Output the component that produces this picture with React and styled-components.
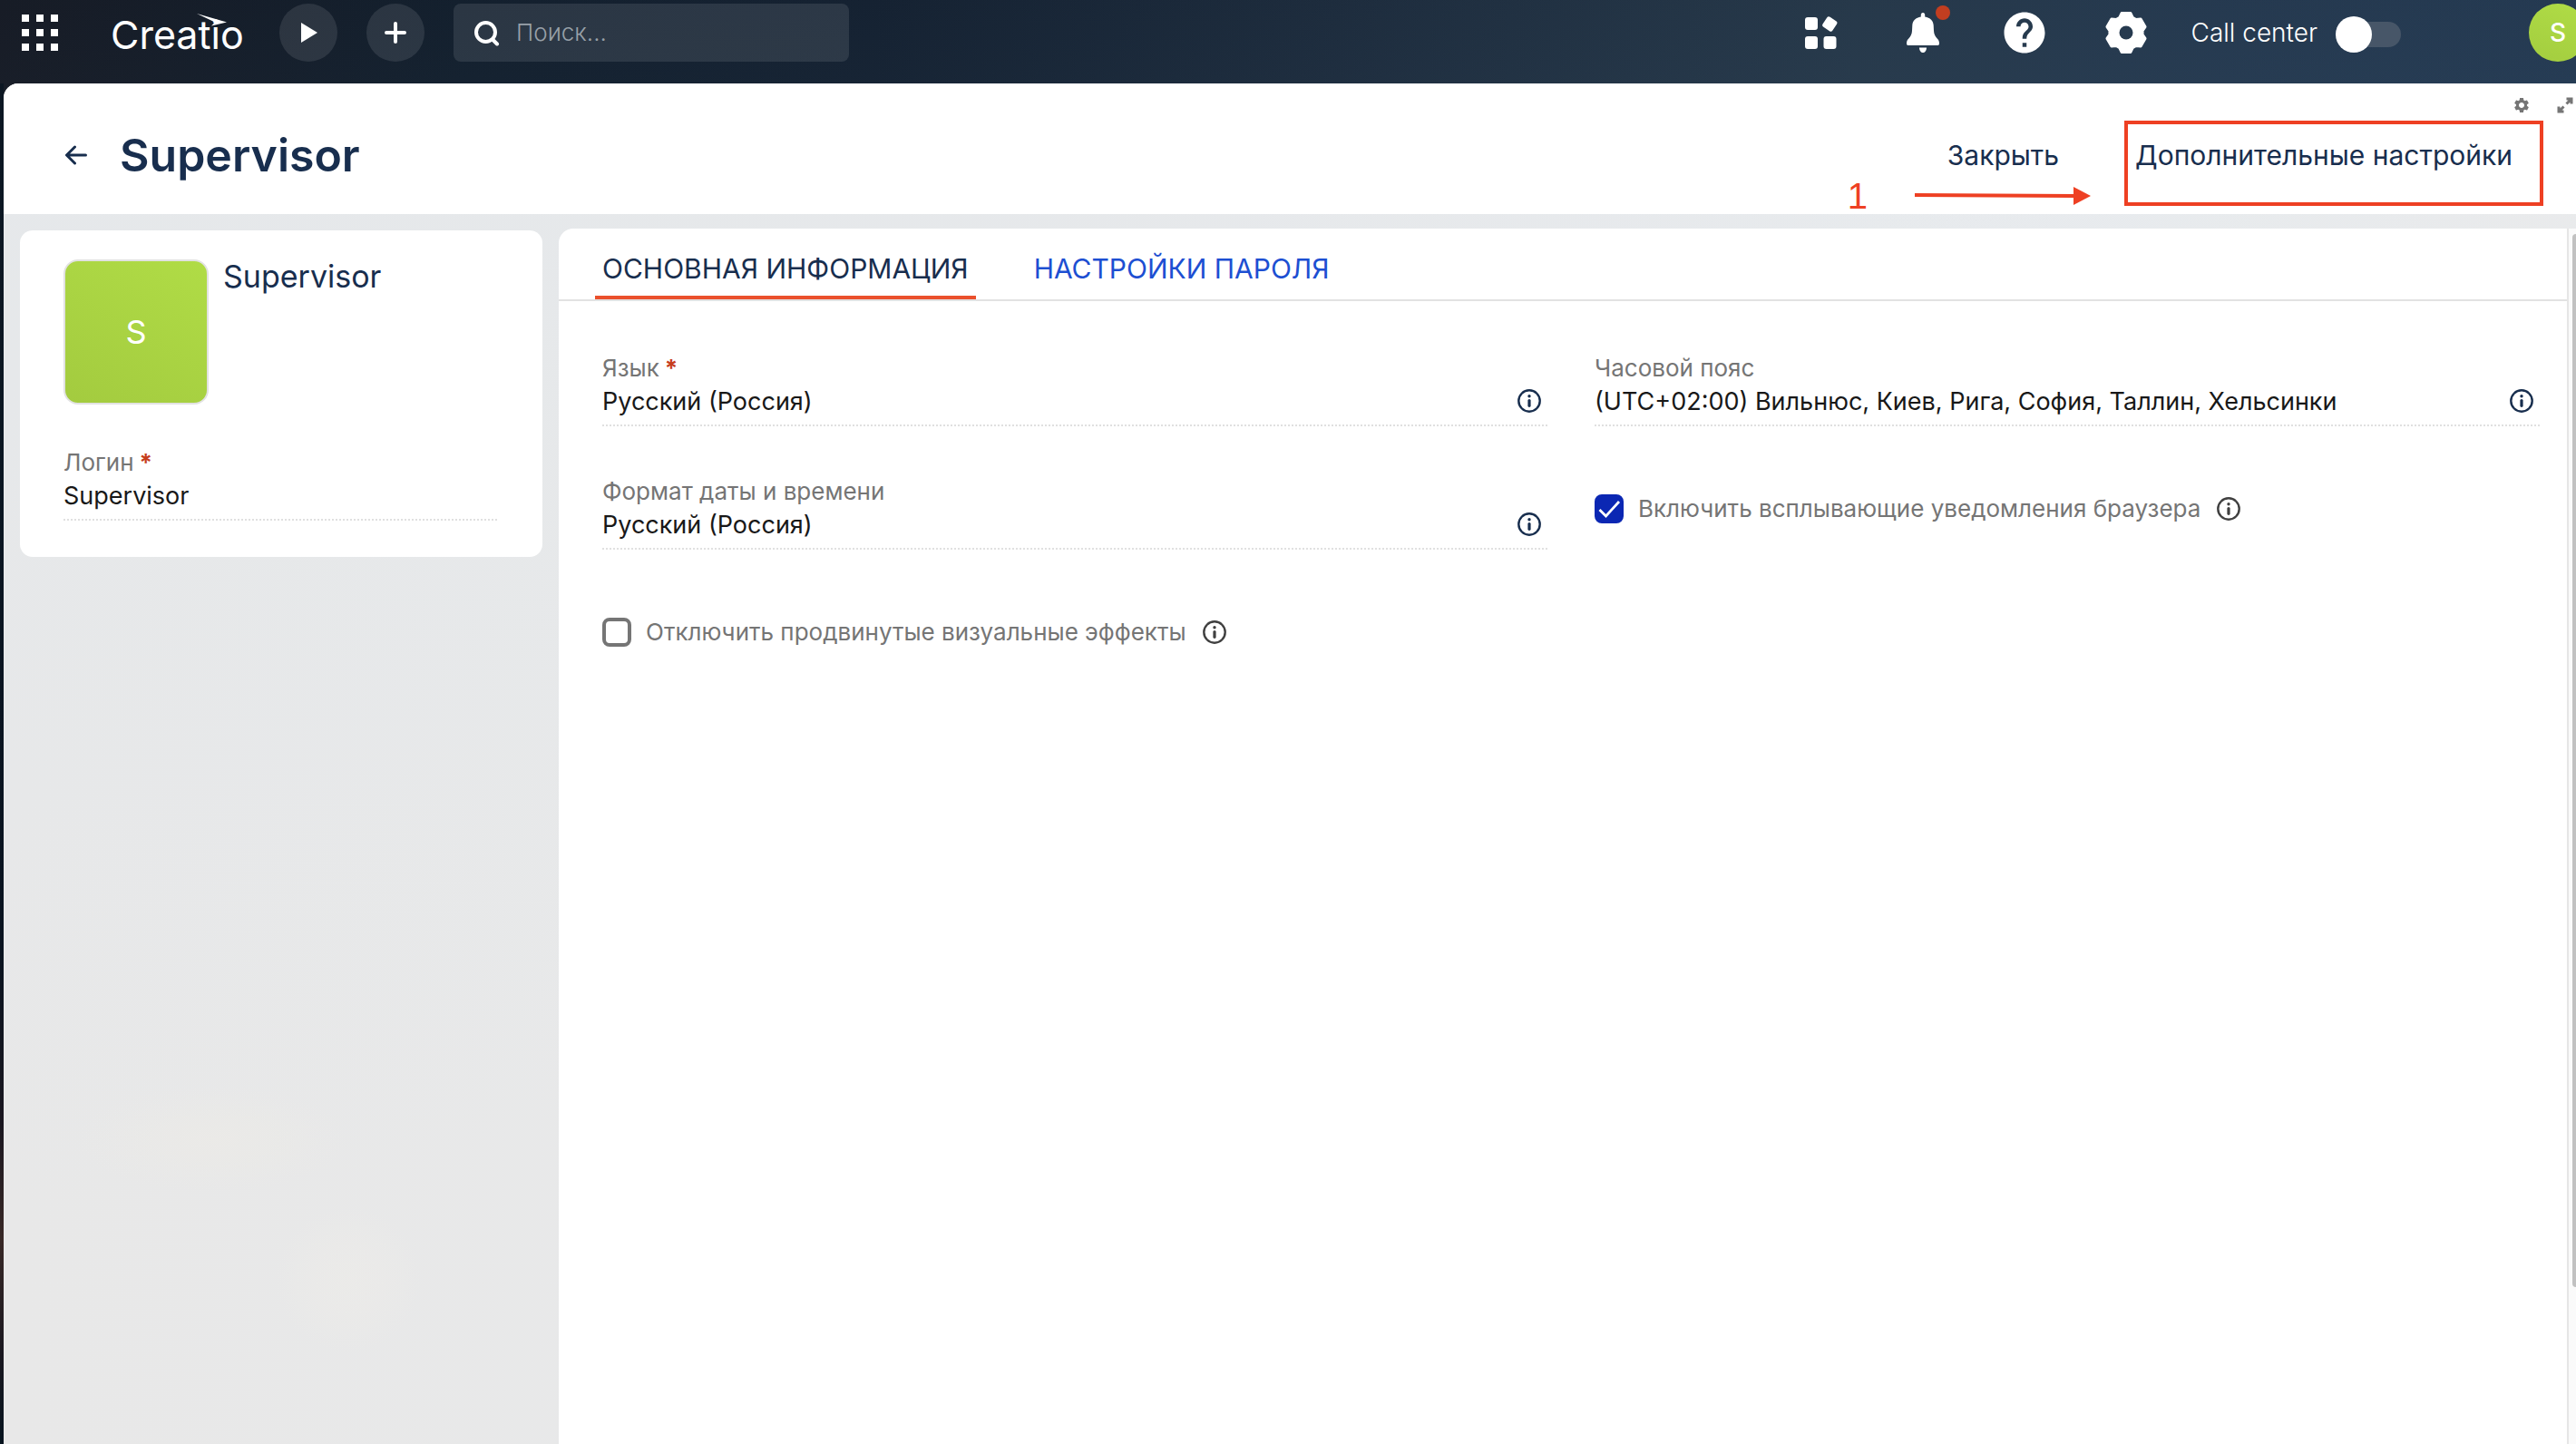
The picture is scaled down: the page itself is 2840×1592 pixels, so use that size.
import React from "react";
import styled, { createGlobalStyle } from "styled-components";
import { MdHelp, MdSettings } from "react-icons/md";

const navy = "#182e4e";
const grey = "#757575";
const accent = "#ee4023";

const GlobalStyle = createGlobalStyle`
  *, *::before, *::after { box-sizing: border-box; }
  body {
    margin: 0;
    font-family: Inter, "Noto Sans", sans-serif;
    color: #181818;
    overflow: hidden;
  }
  button, input { font: inherit; }
`;

const Shell = styled.div`
  min-height: 100vh;
  display: flex;
  flex-direction: column;
  padding-left: 4px;
  background:
    linear-gradient(180deg, #0c1723 0, #0a1420 60%, #1a1720 72%, #382826 80%, #1a1820 88%, #07141f 94%, #0a1420 100%) 0 92px / 4px 100% no-repeat,
    linear-gradient(174deg, rgba(0, 0, 0, 0.08) 0, rgba(70, 100, 120, 0.12) 100%) 0 0 / 100% 120px no-repeat,
    linear-gradient(90deg, #191e29 0, #142130 18%, #152233 34%, #1d2c3e 52%, #26384a 72%, #24384f 86%, #223750 100%);
`;

const TopBar = styled.header`
  height: 92px;
  display: flex;
  align-items: flex-start;
  justify-content: space-between;
  padding: 4px 0 0 20px;
  overflow: hidden;
`;

const BarGroup = styled.div`
  height: 64px;
  display: flex;
  align-items: center;
`;

const IconButton = styled.button`
  position: relative;
  display: flex;
  align-items: center;
  justify-content: center;
  flex: none;
  width: ${(p) => p.$size}px;
  height: ${(p) => p.$size}px;
  padding: 0;
  border: 0;
  background: none;
  color: ${(p) => p.$color || "#fff"};
  cursor: pointer;
`;

const RoundButton = styled(IconButton)`
  border-radius: 50%;
  background: rgba(255, 255, 255, 0.1);
`;

const Logo = styled.a`
  position: relative;
  width: 146px;
  margin: 0 40px 0 58px;
  padding-top: 4px;
  color: #fff;
  font-size: 43px;
  line-height: 64px;
  font-weight: 400;
  text-decoration: none;
`;

const LogoBird = styled.svg`
  position: absolute;
  left: 95px;
  top: 12px;
`;

const MainButtons = styled.div`
  display: flex;
  gap: 32px;
`;

const SearchBox = styled.label`
  width: 436px;
  height: 64px;
  margin-left: 32px;
  padding: 0 22px;
  display: flex;
  align-items: center;
  gap: 18px;
  border-radius: 8px;
  background: rgba(255, 255, 255, 0.1);
`;

const SearchInput = styled.input`
  flex: 1;
  min-width: 0;
  padding: 0 0 2px;
  border: 0;
  outline: 0;
  background: none;
  color: #fff;
  font-size: 26px;
  font-weight: 300;
  &::placeholder { color: #98a0a8; opacity: 1; }
`;

const SystemIcons = styled.div`
  display: flex;
  gap: 56px;
`;

const Badge = styled.span`
  position: absolute;
  right: -2px;
  top: -2px;
  width: 16px;
  height: 16px;
  border-radius: 50%;
  background: #c23e20;
`;

const CallSwitch = styled.label`
  display: flex;
  align-items: center;
  gap: 40px;
  margin: 0 141px 0 44px;
  color: #fff;
  font-size: 28px;
  font-weight: 300;
`;

const SwitchInput = styled.input`
  appearance: none;
  position: relative;
  width: 52px;
  height: 28px;
  margin: 4px 0 0;
  background: #475668;
  border-radius: 14px;
  &::before {
    content: "";
    position: absolute;
    left: -20px;
    top: -6px;
    width: 40px;
    height: 40px;
    border-radius: 50%;
    background: #fff;
  }
`;

const Initial = styled.button`
  flex: none;
  width: 64px;
  height: 64px;
  margin-right: -12px;
  padding: 0;
  border: 0;
  border-radius: 50%;
  background: linear-gradient(200deg, #b0dc46, #a3cd3f);
  color: #fff;
  font-size: 28px;
  font-weight: 500;
`;

const Page = styled.main`
  flex: 1;
  display: flex;
  flex-direction: column;
  border-top-left-radius: 16px;
  overflow: hidden;
  background: #e7e8e8;
`;

const PageHeader = styled.div`
  position: relative;
  height: 144px;
  display: flex;
  align-items: center;
  padding: 14px 58px 0 56px;
  background: #fff;
`;

const Title = styled.h1`
  flex: 1;
  margin: 0 0 0 24px;
  color: ${navy};
  font-size: 50px;
  line-height: 60px;
  font-weight: 600;
`;

const TextButton = styled.button`
  position: relative;
  padding: 0 12px;
  border: 0;
  background: none;
  color: ${navy};
  font-size: 30px;
  line-height: 36px;
  font-weight: 400;
  white-space: nowrap;
`;

const Actions = styled.div`
  display: flex;
  align-items: center;
  gap: 60px;
`;

const CornerTools = styled.div`
  position: absolute;
  right: 0;
  top: 12px;
  display: flex;
  align-items: center;
  gap: 26px;
`;

const Frame = styled.span`
  position: absolute;
  left: 0;
  right: -22px;
  top: -20px;
  height: 94px;
  border: 4px solid ${accent};
  pointer-events: none;
`;

const Step = styled.div`
  position: absolute;
  right: 535px;
  bottom: 0;
  display: flex;
  align-items: center;
  gap: 52px;
  color: ${accent};
  font-family: "Liberation Sans", Arial, sans-serif;
  font-size: 40px;
  line-height: 40px;
`;

const Body = styled.div`
  flex: 1;
  display: flex;
  align-items: stretch;
  background:
    radial-gradient(circle at 380px 1175px, rgba(236, 235, 233, 0.7) 0, rgba(236, 235, 233, 0.5) 40px, rgba(236, 235, 233, 0) 80px),
    radial-gradient(ellipse at 230px 1020px, rgba(235, 234, 231, 0.9) 0, rgba(235, 234, 231, 0) 150px),
    linear-gradient(170deg, rgba(229, 232, 235, 0.8) 0, rgba(232, 232, 232, 0) 60%),
    linear-gradient(90deg, #e8e8e8 0, #e8e9ea 40%, #eaedf0 80%, #ececec 100%);
`;

const Sidebar = styled.aside`
  width: 612px;
  flex: none;
  padding: 18px;
`;

const ProfileCard = styled.section`
  padding: 32px 50px 40px 48px;
  border-radius: 14px;
  background: #fff;
`;

const ProfileTop = styled.div`
  display: flex;
  gap: 16px;
  margin-bottom: 42px;
`;

const Photo = styled.div`
  width: 160px;
  height: 160px;
  display: flex;
  align-items: center;
  justify-content: center;
  border: 2px solid #e2e2e2;
  border-radius: 16px;
  background: linear-gradient(210deg, #b0dc46, #a3cb3f);
  color: #fff;
  font-size: 36px;
`;

const ProfileName = styled.h2`
  margin: 0;
  color: ${navy};
  font-size: 34px;
  line-height: 38px;
  font-weight: 400;
`;

const Content = styled.section`
  flex: 1;
  min-width: 0;
  margin-top: 16px;
  border-top-left-radius: 16px;
  background: #fff;
`;

const Tabs = styled.div`
  display: flex;
  gap: 56px;
  height: 80px;
  padding-left: 40px;
  border-bottom: 2px solid #e2e2e2;
`;

const Tab = styled.button`
  padding: 14px 8px 0;
  border: 0;
  border-bottom: 4px solid ${(p) => (p.$active ? "#ea502c" : "transparent")};
  background: none;
  color: ${(p) => (p.$active ? navy : "#1d4fd2")};
  font-size: 30px;
  line-height: 36px;
  font-weight: 400;
  text-transform: uppercase;
`;

const FormGrid = styled.div`
  display: grid;
  grid-template-columns: 1fr 1fr;
  column-gap: 52px;
  row-gap: 50px;
  padding: 52px 30px 0 48px;
`;

const FieldBox = styled.div`
  height: 86px;
  display: flex;
  flex-direction: column;
  border-bottom: 2px dotted #e0e0e0;
`;

const FieldLabel = styled.label`
  display: flex;
  gap: 6px;
  margin-top: 6px;
  color: ${grey};
  font-size: 26px;
  line-height: 32px;
`;

const Required = styled.span`
  color: #c63d1c;
  font-weight: 700;
`;

const FieldRow = styled.div`
  display: flex;
  align-items: center;
  height: 40px;
  padding-right: 5px;
`;

const ValueInput = styled.input`
  flex: 1;
  min-width: 0;
  height: 36px;
  padding: 0;
  border: 0;
  outline: 0;
  background: none;
  color: #181818;
  font-size: 27px;
`;

const CheckRow = styled.div`
  height: 86px;
  display: flex;
  align-items: center;
  padding-bottom: 4px;
`;

const CheckLabel = styled.label`
  display: flex;
  align-items: center;
  gap: 16px;
  margin-right: 16px;
  color: ${grey};
  font-size: 26px;
  line-height: 32px;
`;

const CheckHolder = styled.span`
  position: relative;
  display: flex;
`;

const CheckInput = styled.input`
  appearance: none;
  width: 32px;
  height: 32px;
  margin: 0;
  border: 4px solid ${grey};
  border-radius: 8px;
  background: #fff;
  &:checked { border-color: #0b27b3; background: #0b27b3; }
`;

const CheckMark = styled.svg`
  position: absolute;
  inset: 0;
  pointer-events: none;
`;

const ScrollTrack = styled.div`
  width: 10px;
  flex: none;
  margin-top: 16px;
  padding: 6px 0 0 4px;
  border-left: 2px solid #e6e6e6;
  background: #fafafa;
`;

const ScrollThumb = styled.div`
  height: 87%;
  border-radius: 4px 0 0 4px;
  background: #c1c1c1;
`;

const gearPoints = Array.from({ length: 6 }, (_, i) => {
  const at = (deg, r) => {
    const a = ((deg + i * 60) * Math.PI) / 180;
    return `${(24 + r * Math.sin(a)).toFixed(2)},${(24 - r * Math.cos(a)).toFixed(2)}`;
  };
  return [at(-13, 22), at(13, 22), at(23, 18.2), at(37, 18.2)].join(" ");
}).join(" ");

const GearIcon = () => (
  <svg width="48" height="48" viewBox="0 0 48 48" aria-hidden="true">
    <mask id="gear-hole">
      <rect width="48" height="48" fill="#fff" />
      <circle cx="24" cy="24" r="7.5" fill="#000" />
    </mask>
    <polygon points={gearPoints} fill="#fff" stroke="#fff" strokeWidth="3" strokeLinejoin="round" mask="url(#gear-hole)" />
  </svg>
);

const LauncherIcon = () => (
  <svg width="40" height="40" viewBox="0 0 40 40" fill="#fff" aria-hidden="true">
    {[0, 16, 32].map((y) => [0, 16, 32].map((x) => <rect key={`${x}-${y}`} x={x} y={y} width="8" height="8" />))}
  </svg>
);

const AppsIcon = () => (
  <svg width="38" height="38" viewBox="0 0 38 38" fill="#fff" aria-hidden="true">
    <rect x="1" y="2" width="14" height="14" rx="3" />
    <rect x="1" y="23" width="14" height="14" rx="3" />
    <rect x="21.5" y="23" width="14" height="14" rx="3" />
    <rect x="21.8" y="3" width="13" height="13" rx="2.5" transform="rotate(34 28.3 9.5)" />
  </svg>
);

const BellIcon = () => (
  <svg width="36" height="44" viewBox="0 0 36 44" fill="#fff" aria-hidden="true">
    <path d="M18 0c1.4 0 2.2 1 2.2 2.3v2.2C26 5.4 29.5 9 29.7 14L30 20c.2 3.600 1.400 6 3.500 8.200C35.300 30 36 31.300 36 34c0 1.400-.8 2-2 2H2c-1.200 0-2-.6-2-2 0-2.700.7-4 2.500-5.800C4.600 26 5.800 23.600 6 20l.3-6C6.500 9 10 5.400 15.800 4.500V2.300C15.800 1 16.600 0 18 0z" />
    <path d="M14 38.500h8c0 3.500-2 5.500-4 5.500s-4-2-4-5.500z" />
  </svg>
);

const ExpandIcon = () => (
  <svg width="18" height="18" viewBox="0 0 18 18" fill="none" stroke="currentColor" strokeWidth="3" aria-hidden="true">
    <path d="M10.500 2H16V7.500M16 2L10.500 7.500M7.500 16H2V10.500M2 16L7.500 10.500" />
  </svg>
);

const InfoIcon = () => (
  <svg width="26" height="26" viewBox="0 0 26 26" aria-hidden="true">
    <circle cx="13" cy="13" r="11.700" fill="none" stroke="currentColor" strokeWidth="2.400" />
    <circle cx="13" cy="7.800" r="1.700" fill="currentColor" />
    <path d="M13 12.500V18.300" stroke="currentColor" strokeWidth="3.200" strokeLinecap="round" />
  </svg>
);

function Field({ id, label, value, required, hint }) {
  return (
    <FieldBox>
      <FieldLabel htmlFor={id}>
        {label}
        {required && <Required>*</Required>}
      </FieldLabel>
      <FieldRow>
        <ValueInput id={id} defaultValue={value} />
        {hint && (
          <IconButton type="button" $size={30} $color={navy} aria-label="Информация">
            <InfoIcon />
          </IconButton>
        )}
      </FieldRow>
    </FieldBox>
  );
}

function Check({ id, label, checked }) {
  return (
    <CheckRow>
      <CheckLabel htmlFor={id}>
        <CheckHolder>
          <CheckInput type="checkbox" id={id} defaultChecked={checked} />
          {checked && (
            <CheckMark width="32" height="32" viewBox="0 0 32 32" fill="none" stroke="#fff" strokeWidth="2.800" aria-hidden="true">
              <path d="M5.500 17L12.500 24L27 8" />
            </CheckMark>
          )}
        </CheckHolder>
        {label}
      </CheckLabel>
      <IconButton type="button" $size={30} $color="#404040" aria-label="Информация">
        <InfoIcon />
      </IconButton>
    </CheckRow>
  );
}

export default function App() {
  return (
    <Shell>
      <GlobalStyle />
      <TopBar>
        <BarGroup>
          <IconButton type="button" $size={40} aria-label="Меню">
            <LauncherIcon />
          </IconButton>
          <Logo href="#">
            Creatio
            <LogoBird width="36" height="18" viewBox="0 0 36 18" fill="#fff" aria-hidden="true">
              <path d="M0 1L33 10.500L16 14.500L20 10.500Z" />
            </LogoBird>
          </Logo>
          <MainButtons>
            <RoundButton type="button" $size={64} aria-label="Запустить">
              <svg width="20" height="24" viewBox="0 0 20 24" fill="#fff" aria-hidden="true">
                <path d="M2 1L20 12L2 23Z" />
              </svg>
            </RoundButton>
            <RoundButton type="button" $size={64} aria-label="Добавить">
              <svg width="24" height="24" viewBox="0 0 24 24" stroke="#fff" strokeWidth="4" strokeLinecap="round" aria-hidden="true">
                <path d="M12 2V22M2 12H22" />
              </svg>
            </RoundButton>
          </MainButtons>
          <SearchBox>
            <svg width="29" height="29" viewBox="0 0 29 29" fill="none" stroke="#fff" strokeWidth="4" strokeLinecap="round" aria-hidden="true">
              <circle cx="13.500" cy="13.500" r="10.500" />
              <path d="M21 21.500L26 26.500" />
            </svg>
            <SearchInput type="text" placeholder="Поиск..." aria-label="Поиск" />
          </SearchBox>
        </BarGroup>
        <BarGroup>
          <SystemIcons>
            <IconButton type="button" $size={56} aria-label="Приложения">
              <AppsIcon />
            </IconButton>
            <IconButton type="button" $size={56} aria-label="Уведомления">
              <BellIcon />
              <Badge />
            </IconButton>
            <IconButton type="button" $size={56} aria-label="Справка">
              <MdHelp size={54} />
            </IconButton>
            <IconButton type="button" $size={56} aria-label="Настройки">
              <GearIcon />
            </IconButton>
          </SystemIcons>
          <CallSwitch>
            Call center
            <SwitchInput type="checkbox" role="switch" />
          </CallSwitch>
          <Initial type="button">S</Initial>
        </BarGroup>
      </TopBar>

      <Page>
        <PageHeader>
          <IconButton type="button" $size={48} $color={navy} aria-label="Назад">
            <svg width="24" height="22" viewBox="0 0 24 22" fill="none" stroke="currentColor" strokeWidth="3" strokeLinecap="round" strokeLinejoin="round" aria-hidden="true">
              <path d="M22.500 11H2M10.500 2L1.500 11L10.500 20" />
            </svg>
          </IconButton>
          <Title>Supervisor</Title>
          <Actions>
            <TextButton type="button">Закрыть</TextButton>
            <TextButton type="button">
              Дополнительные настройки
              <Frame />
            </TextButton>
          </Actions>
          <CornerTools>
            <IconButton type="button" $size={20} $color={grey} aria-label="Настроить страницу">
              <MdSettings size={20} />
            </IconButton>
            <IconButton type="button" $size={24} $color={grey} aria-label="Развернуть">
              <ExpandIcon />
            </IconButton>
          </CornerTools>
          <Step>
            1
            <svg width="194" height="22" viewBox="0 0 194 22" aria-hidden="true">
              <path d="M0 10L176 11" stroke={accent} strokeWidth="4" />
              <path d="M175 1L194 11L175 21Z" fill={accent} />
            </svg>
          </Step>
        </PageHeader>

        <Body>
          <Sidebar>
            <ProfileCard>
              <ProfileTop>
                <Photo>S</Photo>
                <ProfileName>Supervisor</ProfileName>
              </ProfileTop>
              <Field id="login" label="Логин" value="Supervisor" required />
            </ProfileCard>
          </Sidebar>
          <Content>
            <Tabs role="tablist">
              <Tab type="button" role="tab" aria-selected="true" $active>Основная информация</Tab>
              <Tab type="button" role="tab" aria-selected="false">Настройки пароля</Tab>
            </Tabs>
            <FormGrid>
              <Field id="language" label="Язык" value="Русский (Россия)" required hint />
              <Field id="timezone" label="Часовой пояс" value="(UTC+02:00) Вильнюс, Киев, Рига, София, Таллин, Хельсинки" hint />
              <Field id="format" label="Формат даты и времени" value="Русский (Россия)" hint />
              <Check id="popups" label="Включить всплывающие уведомления браузера" checked />
              <Check id="effects" label="Отключить продвинутые визуальные эффекты" />
            </FormGrid>
          </Content>
          <ScrollTrack>
            <ScrollThumb />
          </ScrollTrack>
        </Body>
      </Page>
    </Shell>
  );
}
